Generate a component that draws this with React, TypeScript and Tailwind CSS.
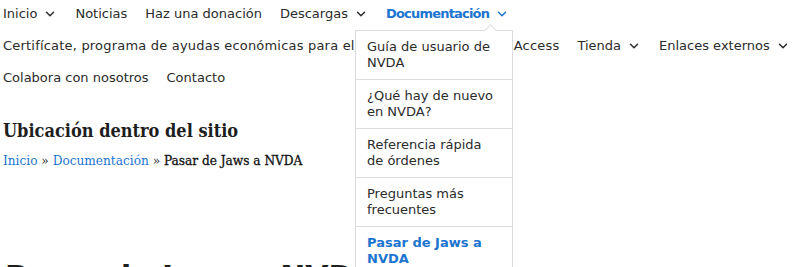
import { ChevronDown } from 'lucide-react';

interface NavItem {
  label: string;
  sub?: boolean;
  active?: boolean;
}

const navItems: NavItem[] = [
  { label: 'Inicio', sub: true },
  { label: 'Noticias' },
  { label: 'Haz una donación' },
  { label: 'Descargas', sub: true },
  { label: 'Documentación', sub: true, active: true },
  { label: 'Certifícate, programa de ayudas económicas para el sistema NVDA Remote Access' },
  { label: 'Tienda', sub: true },
  { label: 'Enlaces externos', sub: true },
  { label: 'Colabora con nosotros' },
  { label: 'Contacto' },
];

const docLinks = [
  'Guía de usuario de NVDA',
  '¿Qué hay de nuevo en NVDA?',
  'Referencia rápida de órdenes',
  'Preguntas más frecuentes',
  'Pasar de Jaws a NVDA',
];

const sans = { fontFamily: '"DejaVu Sans", sans-serif' };
const serif = { fontFamily: '"DejaVu Serif", serif' };

export default function App() {
  return (
    <div className="relative w-[795px] h-[267px] overflow-hidden bg-white text-[#2b2b2b]" style={sans}>
      <nav className="relative -mt-[2px] pl-[3px]">
        <ul className="flex flex-wrap gap-x-[18px] text-[13px] w-[792px]">
          {navItems.map((item) => (
            <li
              key={item.label}
              className={`h-8 flex items-center gap-[6px] ${item.active ? 'text-[#1b75d0] font-bold tracking-[-0.8px]' : ''} ${item.label.length > 40 ? 'tracking-[0.2px]' : ''}`}
            >
              <span>{item.label}</span>
              {item.sub && <ChevronDown className="w-[14px] h-[14px]" strokeWidth={2.5} />}
            </li>
          ))}
        </ul>

        <div className="absolute left-[355px] top-[32px] w-[158px] bg-white border border-[#dcdcdc] z-10">
          <div className="absolute -top-[5px] right-[17px] w-[9px] h-[9px] rotate-45 bg-white border-l border-t border-[#dcdcdc]" />
          <ul className="relative text-[13px] leading-[16px]">
            {docLinks.map((link, i) => (
              <li
                key={link}
                className={`px-[11px] pt-[8px] pb-[8px] border-b border-[#dcdcdc] ${i === docLinks.length - 1 ? 'text-[#1b75d0] font-bold' : ''}`}
              >
                {link}
              </li>
            ))}
          </ul>
        </div>
      </nav>

      <div className="pl-[3px] mt-[23px] font-stretch-condensed" style={serif}>
        <h2 className="text-[18px] font-bold text-[#1e1e1e] leading-[28px]">Ubicación dentro del sitio</h2>
        <p className="text-[13.5px] leading-[28px] mt-[1px]">
          <a className="text-[#1b75d0]">Inicio</a> » <a className="text-[#1b75d0]">Documentación</a> »{' '}
          <span className="text-[#111] [-webkit-text-stroke:0.3px_#111]">Pasar de Jaws a NVDA</span>
        </p>
      </div>

      <h1 className="pl-[5px] mt-[85px] text-[30px] leading-[36px] font-bold text-[#1e1e1e]">Pasar de Jaws a NVDA</h1>
    </div>
  );
}
